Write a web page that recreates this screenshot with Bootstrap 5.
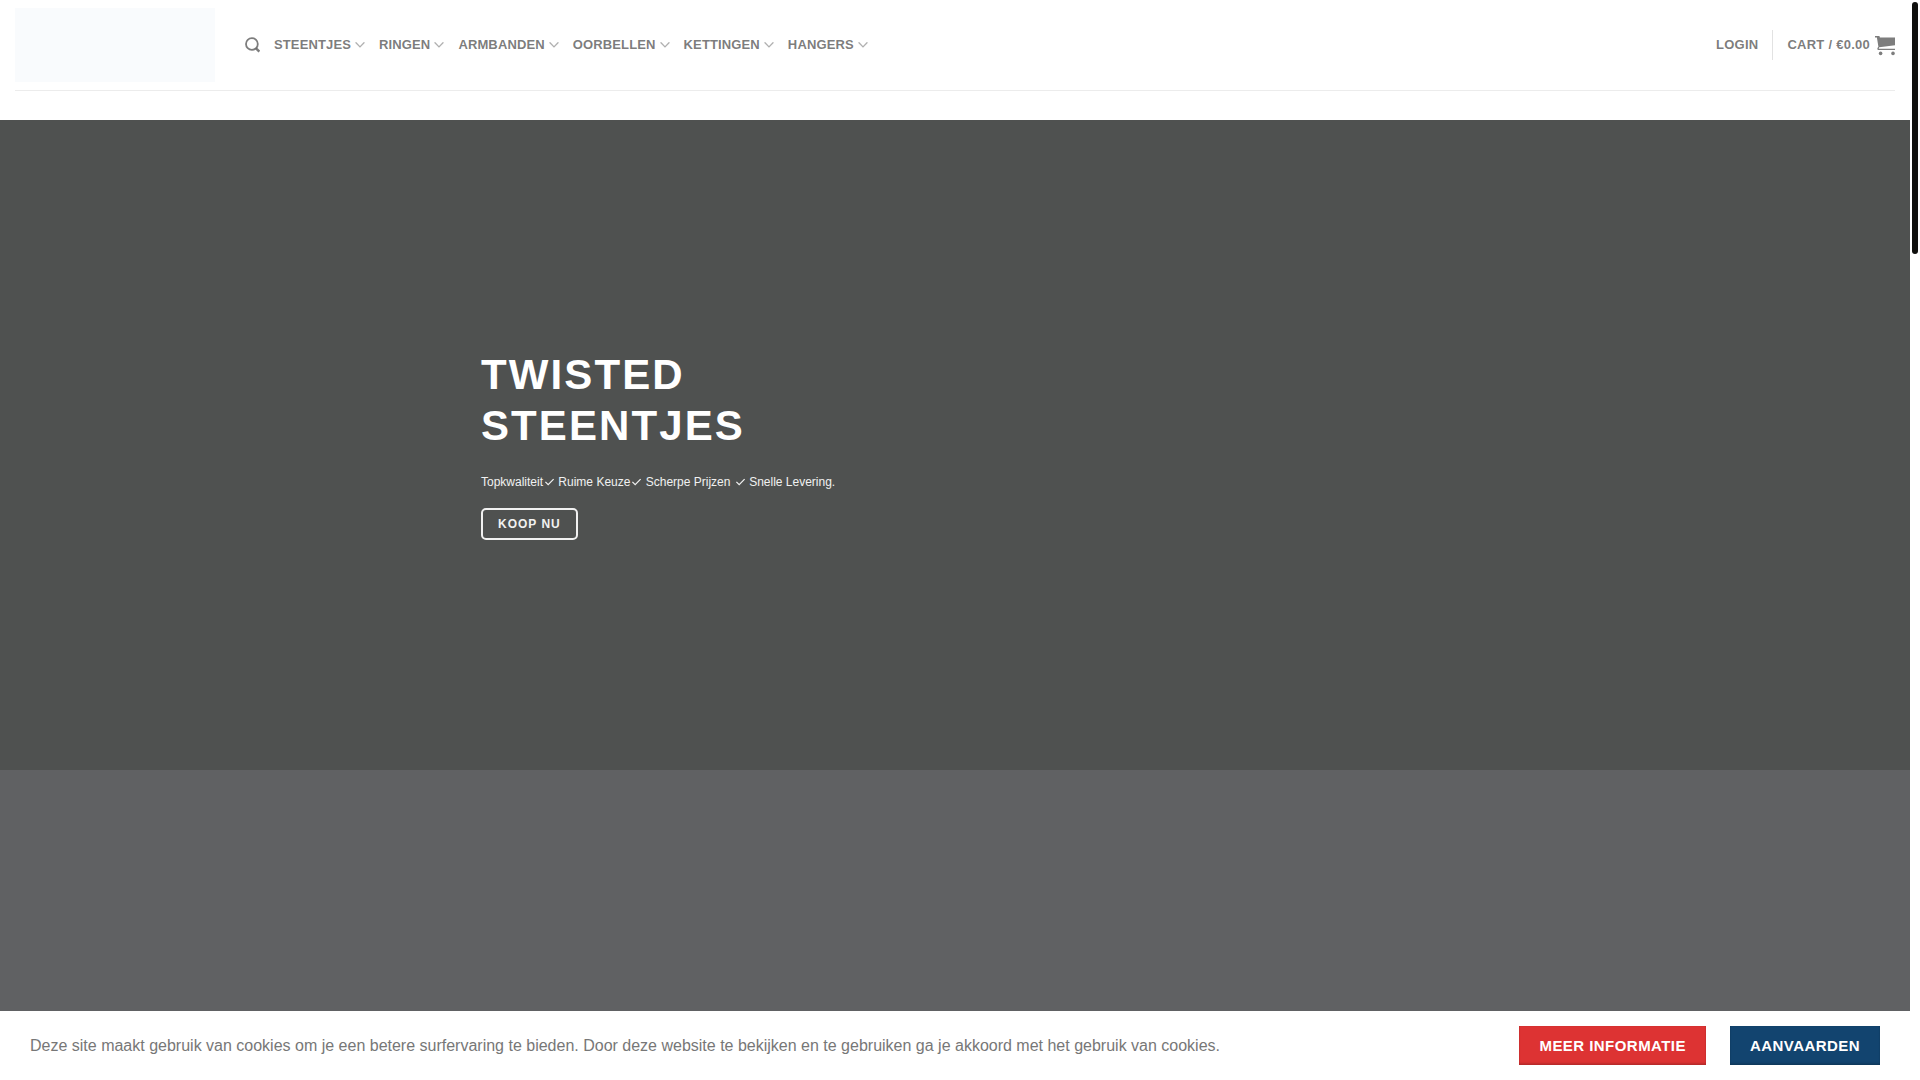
<!DOCTYPE html>
<html lang="nl">
<head>
<meta charset="utf-8">
<meta name="viewport" content="width=device-width, initial-scale=1">
<title>Twisted Steentjes</title>
<link href="https://cdn.jsdelivr.net/npm/bootstrap@5.3.0/dist/css/bootstrap.min.css" rel="stylesheet">
<style>
  :root { --gutter: 10px; }
  body { font-family: "Liberation Sans", Arial, sans-serif; color: #777; background: #fff; }
  .page { height: 100vh; overflow: hidden; padding-right: var(--gutter); }
  .shop-header { padding: 0 15px; margin-bottom: 29px; }
  .header-row { height: 90px; }
  .header-line { height: 1px; background: #ececec; }
  .logo-box { width: 200px; height: 74px; background: #f9fbfd; margin-right: 30px; }
  .shop-nav { gap: 14px; font-size: 13px; line-height: 16px; font-weight: 700; letter-spacing: .01em; }
  .account-nav { letter-spacing: .02em; }
  .shop-nav a, .icon-btn { color: rgba(102,102,102,.85); text-decoration: none; }
  .shop-nav a:hover { color: #333; }
  .chev { width: 10px; height: 6px; margin-left: 4px; opacity: .6; }
  .split { width: 1px; height: 30px; background: #e2e2e2; }
  .hero { height: 650px; padding-bottom: 2px; background: #4f5150; color: #fff; }
  .hero-inner { width: 100%; max-width: 948px; }
  .hero-title { font-size: 42px; line-height: 51px; font-weight: 700; letter-spacing: .05em; margin: 0 0 19px; }
  .hero-text { font-size: 12px; line-height: 24px; margin: 0 0 14px; color: #f1f1f1; }
  .tick { width: 11px; height: 8px; margin-left: 1px; vertical-align: baseline; }
  .btn-shop { height: 32px; padding: 0 15px; border: 2px solid #f1f1f1; border-radius: 5px; color: #f1f1f1; font-size: 12px; line-height: 28px; font-weight: 700; letter-spacing: 1px; }
  .btn-shop:hover { background: #fff; color: #444; }
  .next-banner { height: 400px; background: #606163; }
  .cookie-bar { right: var(--gutter); padding: 15px 30px; background: #fff; font-size: 16px; line-height: 24px; color: #777; }
  .cookie-btn { height: 39px; padding: 0 20px; border: 0; border-radius: 0; color: #fff; font-size: 15px; line-height: 39px; font-weight: 700; letter-spacing: .03em; box-shadow: inset 0 -2px 2px rgba(0,0,0,.14), inset 0 0 1px rgba(0,0,0,.3); }
  .cookie-btn:hover { color: #fff; }
  .btn-info-red, .btn-info-red:hover { background: #dd3333; }
  .btn-accept, .btn-accept:hover { background: #12446f; }
  .scroll-track { width: var(--gutter); padding: 2px; background: #fff; z-index: 1040; }
  .scroll-thumb { height: 252px; border-radius: 3px; background: #0f0f0d; }
</style>
<script src="https://cdn.jsdelivr.net/npm/bootstrap@5.3.0/dist/js/bootstrap.bundle.min.js"></script>
</head>
<body>
<svg class="d-none" xmlns="http://www.w3.org/2000/svg">
  <symbol id="chevron" viewBox="0 0 10 6"><path d="M1 .8 5 4.9 9 .8" fill="none" stroke="currentColor" stroke-width="1.3" stroke-linecap="round"/></symbol>
  <symbol id="check" viewBox="0 0 11 8"><path d="M1.4 3.8 4.2 6.7 9.6 1.2" fill="none" stroke="currentColor" stroke-width="1.2"/></symbol>
</svg>
<div class="page">
  <header class="shop-header">
    <div class="header-row d-flex align-items-center">
      <a href="#" class="logo-box flex-shrink-0" aria-label="Home"></a>
      <nav class="shop-nav d-flex align-items-center flex-grow-1" aria-label="Hoofdmenu">
        <button type="button" class="icon-btn btn p-0 border-0 d-flex" aria-label="Zoeken">
          <svg width="15" height="16" viewBox="0 0 15 16" fill="none" stroke="currentColor"><circle cx="6.9" cy="7" r="5.9" stroke-width="1.8"/><path d="m10.9 11.2 3.4 3.4" stroke-width="2.5"/></svg>
        </button>
        <a href="#" class="d-flex align-items-center">STEENTJES<svg class="chev"><use href="#chevron"/></svg></a>
        <a href="#" class="d-flex align-items-center">RINGEN<svg class="chev"><use href="#chevron"/></svg></a>
        <a href="#" class="d-flex align-items-center">ARMBANDEN<svg class="chev"><use href="#chevron"/></svg></a>
        <a href="#" class="d-flex align-items-center">OORBELLEN<svg class="chev"><use href="#chevron"/></svg></a>
        <a href="#" class="d-flex align-items-center">KETTINGEN<svg class="chev"><use href="#chevron"/></svg></a>
        <a href="#" class="d-flex align-items-center">HANGERS<svg class="chev"><use href="#chevron"/></svg></a>
      </nav>
      <div class="shop-nav account-nav d-flex align-items-center">
        <a href="#">LOGIN</a>
        <span class="split"></span>
        <a href="#" class="d-flex align-items-center">CART / €0.00
          <svg class="ms-1" width="21" height="22" viewBox="0 0 21 22" fill="currentColor"><path d="M1 2h4.4l.5 1.5H21v7.7L5.2 13.2l-.5 1.6H21v1.2H4.2q-1.5-.4-.7-1.9l.9-1.3L2.9 3.4H1z"/><circle cx="6.6" cy="19.4" r="1.8"/><circle cx="19" cy="19.4" r="1.8"/></svg></a>
      </div>
    </div>
    <div class="header-line"></div>
  </header>
  <main>
    <section class="hero d-flex align-items-center">
      <div class="hero-inner mx-auto">
        <h1 class="hero-title">TWISTED<br>STEENTJES</h1>
        <p class="hero-text">Topkwaliteit<svg class="tick"><use href="#check"/></svg> Ruime Keuze<svg class="tick"><use href="#check"/></svg> Scherpe Prijzen <svg class="tick"><use href="#check"/></svg> Snelle Levering.</p>
        <button type="button" class="btn btn-shop d-block">KOOP NU</button>
      </div>
    </section>
    <section class="next-banner"></section>
  </main>
</div>
<div class="cookie-bar fixed-bottom d-flex align-items-center">
  <div class="flex-grow-1">Deze site maakt gebruik van cookies om je een betere surfervaring te bieden. Door deze website te bekijken en te gebruiken ga je akkoord met het gebruik van cookies.</div>
  <div class="d-flex gap-4 flex-shrink-0">
    <button type="button" class="btn cookie-btn btn-info-red">MEER INFORMATIE</button>
    <button type="button" class="btn cookie-btn btn-accept">AANVAARDEN</button>
  </div>
</div>
<div class="scroll-track position-fixed top-0 end-0 h-100" aria-hidden="true"><div class="scroll-thumb"></div></div>
</body>
</html>
